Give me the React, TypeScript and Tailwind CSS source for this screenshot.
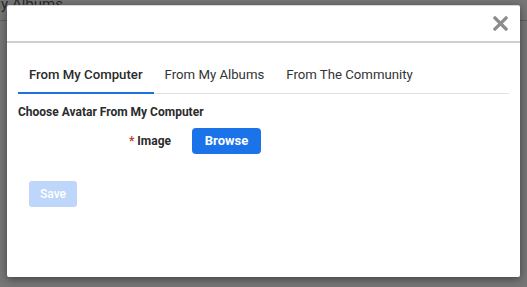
import React, { useState } from "react";

const tabs = ["From My Computer", "From My Albums", "From The Community"];

export default function App() {
  const [active, setActive] = useState(0);

  return (
    <div
      className="relative h-[287px] w-[527px] overflow-hidden bg-[#767676]"
      style={{ fontFamily: "Roboto, 'Liberation Sans', sans-serif" }}
    >
      {/* page behind the overlay */}
      <div className="absolute left-[-12px] top-[-7px] text-[15px] text-[#2a2a2a]">My Albums</div>
      <div className="absolute left-0 right-0 top-[20px] h-px bg-[#5f5f5f]" />

      <div className="relative ml-[7px] mt-[5px] flex h-[272px] w-[513px] flex-col rounded-[2px] border-t border-[#d8d8d8] bg-white shadow-[0_2px_8px_rgba(0,0,0,0.45)]">
        <div className="flex h-[37px] items-center justify-end border-b-2 border-[#cfcfcf] pr-[12px]">
          <button className="flex h-[16px] w-[16px] items-center justify-center">
            <svg width="15" height="15" viewBox="0 0 15 15">
              <path d="M2 2 L13 13 M13 2 L2 13" stroke="#8c8c8c" strokeWidth="3.2" strokeLinecap="square" />
            </svg>
          </button>
        </div>

        <div className="px-[11px]">
          <div className="mt-[14px] flex border-b border-[#e2e2e2]">
            {tabs.map((t, i) => (
              <button
                key={t}
                onClick={() => setActive(i)}
                className={
                  i === active
                    ? "-mb-px h-[37px] border-b-2 border-[#1f6fe0] px-[11px] text-[13.2px] font-medium text-[#2b2b2b]"
                    : "-mb-px h-[37px] border-b-2 border-transparent px-[11px] text-[13.2px] text-[#333]"
                }
              >
                {t}
              </button>
            ))}
          </div>

          <div className="mt-[9px] text-[12px] font-bold text-[#2b2b2b]">Choose Avatar From My Computer</div>

          <div className="mt-[7px] flex items-center gap-[21px]">
            <div className="w-[153px] text-right text-[12px] font-bold text-[#2b2b2b]">
              <span className="mr-[3px] text-[#c0392b]">*</span>Image
            </div>
            <button className="h-[26px] w-[69px] rounded-[4px] bg-[#1a73e8] text-[13px] font-bold text-white">
              Browse
            </button>
          </div>

          <button className="ml-[11px] mt-[27px] h-[26px] w-[48px] rounded-[3px] bg-[#bdd6fa] text-[12px] font-medium text-white">
            Save
          </button>
        </div>
      </div>
    </div>
  );
}
